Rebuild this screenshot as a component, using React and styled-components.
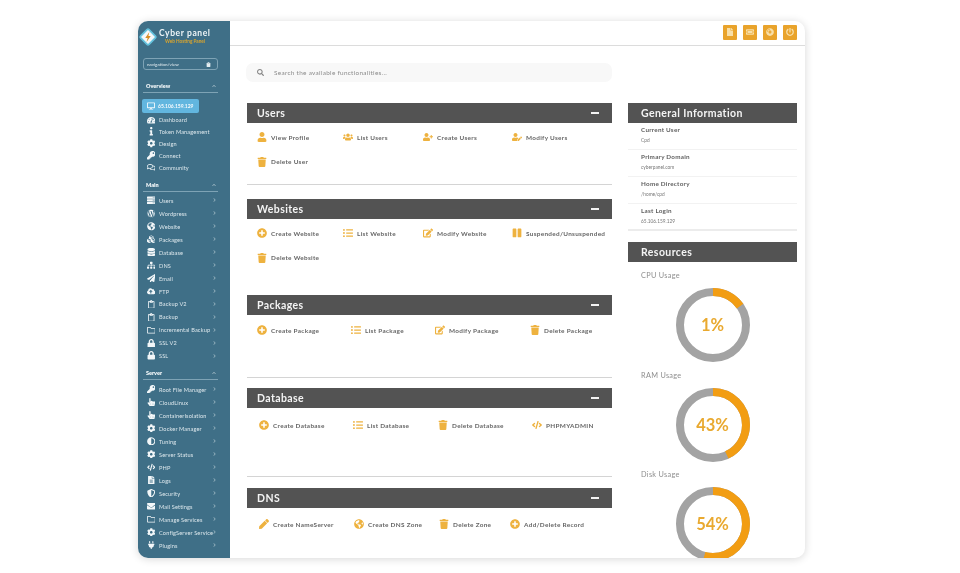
import React from "react";
import styled, { createGlobalStyle } from "styled-components";
import {
  FaAdjust, FaChevronRight, FaChevronUp, FaClipboard, FaCloudUploadAlt, FaCode, FaCog, FaCubes,
  FaDatabase, FaEdit, FaEnvelope, FaFileAlt, FaGlobeAmericas, FaHandPointer, FaInfo, FaKey,
  FaListUl, FaLock, FaPaperPlane, FaPause, FaPen, FaPlug, FaPlusCircle, FaPowerOff, FaRegComments,
  FaRegFolder, FaSearch, FaServer, FaShieldAlt, FaSitemap, FaTachometerAlt, FaTicketAlt, FaTrash,
  FaUser, FaUserEdit, FaUserPlus, FaUsers, FaWordpress, FaCompactDisc, FaFile, FaDesktop, FaRegClipboard,
} from "react-icons/fa";

const overview = [
  [FaTachometerAlt, "Dashboard"],
  [FaInfo, "Token Management"],
  [FaCog, "Design"],
  [FaKey, "Connect"],
  [FaRegComments, "Community"],
];

const mainNav = [
  [FaServer, "Users"],
  [FaWordpress, "Wordpress"],
  [FaGlobeAmericas, "Website"],
  [FaCubes, "Packages"],
  [FaDatabase, "Database"],
  [FaSitemap, "DNS"],
  [FaPaperPlane, "Email"],
  [FaCloudUploadAlt, "FTP"],
  [FaRegClipboard, "Backup V2"],
  [FaRegClipboard, "Backup"],
  [FaRegFolder, "Incremental Backup"],
  [FaLock, "SSL V2"],
  [FaLock, "SSL"],
];

const serverNav = [
  [FaKey, "Root File Manager"],
  [FaHandPointer, "CloudLinux"],
  [FaHandPointer, "ContainerIsolation"],
  [FaCog, "Docker Manager"],
  [FaAdjust, "Tuning"],
  [FaCog, "Server Status"],
  [FaCode, "PHP"],
  [FaFileAlt, "Logs"],
  [FaShieldAlt, "Security"],
  [FaEnvelope, "Mail Settings"],
  [FaRegFolder, "Manage Services"],
  [FaCog, "ConfigServer Service"],
  [FaPlug, "Plugins"],
];

const sections = [
  {
    title: "Users",
    height: 96,
    rule: 14,
    pad: 9,
    top: 7,
    columns: "86px 80px 89px 1fr",
    items: [
      [FaUser, "View Profile"],
      [FaUsers, "List Users"],
      [FaUserPlus, "Create Users"],
      [FaUserEdit, "Modify Users"],
      [FaTrash, "Delete User"],
    ],
  },
  {
    title: "Websites",
    height: 96,
    pad: 9,
    top: 7,
    columns: "86px 80px 89px 1fr",
    items: [
      [FaPlusCircle, "Create Website"],
      [FaListUl, "List Website"],
      [FaEdit, "Modify Website"],
      [FaPause, "Suspended/Unsuspended"],
      [FaTrash, "Delete Website"],
    ],
  },
  {
    title: "Packages",
    height: 93,
    rule: 10,
    pad: 9,
    top: 8,
    columns: "94px 84px 95px 1fr",
    items: [
      [FaPlusCircle, "Create Package"],
      [FaListUl, "List Package"],
      [FaEdit, "Modify Package"],
      [FaTrash, "Delete Package"],
    ],
  },
  {
    title: "Database",
    height: 100,
    rule: 11,
    pad: 11,
    top: 10,
    columns: "94px 85px 94px 1fr",
    items: [
      [FaPlusCircle, "Create Database"],
      [FaListUl, "List Database"],
      [FaTrash, "Delete Database"],
      [FaCode, "PHPMYADMIN"],
    ],
  },
  {
    title: "DNS",
    height: 70,
    pad: 11,
    top: 9,
    columns: "95px 85px 71px 1fr",
    items: [
      [FaPen, "Create NameServer"],
      [FaGlobeAmericas, "Create DNS Zone"],
      [FaTrash, "Delete Zone"],
      [FaPlusCircle, "Add/Delete Record"],
    ],
  },
];

const info = [
  ["Current User", "Cpd"],
  ["Primary Domain", "cyberpanel.com"],
  ["Home Directory", "/home/cpd"],
  ["Last Login", "65.106.159.129"],
];

const usage = [
  { label: "CPU Usage", text: "1%", sweep: 55 },
  { label: "RAM Usage", text: "43%", sweep: 155 },
  { label: "Disk Usage", text: "54%", sweep: 195 },
];

const GlobalStyle = createGlobalStyle`
  html, body {
    margin: 0;
    background: #fff;
    overflow: hidden;
  }
  * {
    box-sizing: border-box;
  }
`;

const Page = styled.div`
  width: 960px;
  height: 573px;
  padding: 21px 155px 15px 138px;
  font-family: "Lato", "Liberation Sans", sans-serif;
  filter: blur(0.3px);
`;

const Card = styled.div`
  display: flex;
  height: 537px;
  border-radius: 10px;
  overflow: hidden;
  background: #fff;
  box-shadow: 0 1px 8px rgba(0, 0, 0, 0.16);
`;

const Sidebar = styled.aside`
  flex: 0 0 92px;
  padding: 0 12px 0 5px;
  background: #3f6f87;
  color: #e4edf1;
`;

const Brand = styled.div`
  display: flex;
  align-items: center;
  gap: 1px;
  height: 31px;
`;

const BrandName = styled.div`
  font-size: 8.5px;
  font-weight: 700;
  letter-spacing: 0.6px;
  line-height: 9px;
  color: #eef5f8;
  white-space: nowrap;
`;

const BrandSub = styled.div`
  font-size: 4.7px;
  font-weight: 700;
  line-height: 7px;
  padding-left: 6px;
  color: #d9a52e;
  white-space: nowrap;
`;

const SideSearch = styled.div`
  display: flex;
  align-items: center;
  justify-content: space-between;
  height: 12px;
  margin-top: 6px;
  padding: 0 6px 0 3px;
  border: 1px solid #7ea3b5;
  border-radius: 3px;
  font-size: 4.5px;
  color: #e4edf1;
  svg {
    width: 5px;
    height: 5px;
  }
`;

const GroupLabel = styled.div`
  display: flex;
  align-items: center;
  justify-content: space-between;
  height: ${(p) => p.$height || 12.5}px;
  margin-top: ${(p) => p.$top}px;
  padding: 0 2px 0 3px;
  border-bottom: 1px solid #7ea3b5;
  font-size: 5.5px;
  font-weight: 800;
  color: #f2f7f9;
  svg {
    width: 4px;
    height: 4px;
    opacity: 0.6;
  }
`;

const IpButton = styled.div`
  display: flex;
  align-items: center;
  gap: 3px;
  width: 57px;
  height: 14px;
  margin: 6.5px 0 1px -1px;
  padding-left: 5px;
  border-radius: 2px;
  background: #62b6df;
  font-size: 5px;
  font-weight: 700;
  color: #f3fafd;
  svg {
    width: 8px;
    height: 8px;
  }
`;

const NavList = styled.nav`
  display: flex;
  flex-direction: column;
  margin-top: ${(p) => p.$top || 0}px;
`;

const NavRow = styled.div`
  display: flex;
  align-items: center;
  height: ${(p) => p.$row}px;
  font-size: 5.6px;
  letter-spacing: 0.15px;
  white-space: nowrap;
  color: #dde8ed;
`;

const NavIcon = styled.span`
  display: flex;
  align-items: center;
  justify-content: center;
  flex: 0 0 16px;
  svg {
    width: 8.5px;
    height: 8.5px;
    color: #f3f7f9;
  }
`;

const NavChevron = styled.span`
  display: flex;
  margin-left: auto;
  padding-right: 2px;
  svg {
    width: 3px;
    height: 4px;
    opacity: 0.6;
  }
`;

const Main = styled.main`
  flex: 1;
  min-width: 0;
  display: flex;
  flex-direction: column;
`;

const TopBar = styled.header`
  display: flex;
  justify-content: flex-end;
  gap: 5.5px;
  flex: 0 0 25px;
  padding: 4px 8px 0 0;
  border-bottom: 1px solid #dcdcdc;
`;

const TopButton = styled.div`
  display: flex;
  align-items: center;
  justify-content: center;
  width: 14.5px;
  height: 14.5px;
  border-radius: 1px;
  background: #e9a32b;
  svg {
    width: 8px;
    height: 8px;
    color: #f8dfa8;
  }
`;

const Content = styled.div`
  display: grid;
  grid-template-columns: 365px 169px;
  column-gap: 16px;
  padding-left: 17px;
`;

const LeftColumn = styled.div`
  display: flex;
  flex-direction: column;
`;

const SearchBox = styled.div`
  display: flex;
  align-items: center;
  gap: 10px;
  height: 19px;
  margin: 17px 0 21px -1px;
  padding-left: 11px;
  border-radius: 7px;
  background: #f8f8f8;
  font-size: 6.4px;
  letter-spacing: 0.3px;
  color: #8b8b8b;
  svg {
    width: 7px;
    height: 7px;
    color: #858585;
  }
`;

const Section = styled.section`
  display: flex;
  flex-direction: column;
  flex: 0 0 ${(p) => p.$height}px;
`;

const SectionBar = styled.div`
  display: flex;
  align-items: center;
  justify-content: space-between;
  height: 20px;
  flex: none;
  padding: 0 13px 0 10px;
  background: #535353;
  font-size: 10.5px;
  font-weight: 700;
  letter-spacing: 0.4px;
  color: #f4f4f4;
`;

const Minus = styled.span`
  width: 8px;
  height: 1.5px;
  background: #f4f4f4;
`;

const ActionGrid = styled.div`
  display: grid;
  grid-template-columns: ${(p) => p.$columns};
  grid-auto-rows: 14px;
  row-gap: 10.5px;
  padding: ${(p) => p.$top}px 0 0 ${(p) => p.$pad}px;
`;

const Action = styled.div`
  display: flex;
  align-items: center;
  font-size: 6.4px;
  font-weight: 700;
  letter-spacing: 0.3px;
  white-space: nowrap;
  color: #666;
`;

const ActionIcon = styled.span`
  display: flex;
  justify-content: center;
  flex: 0 0 15px;
  padding-right: 4px;
  svg {
    width: 10px;
    height: 10px;
    color: #eeb23f;
  }
`;

const Rule = styled.hr`
  width: 100%;
  height: 1px;
  margin: auto 0 ${(p) => p.$gap}px;
  border: 0;
  background: #d4d4d4;
`;

const RightColumn = styled.div`
  padding-top: 57px;
`;

const InfoItem = styled.div`
  height: 27px;
  padding: 1px 0 0 13px;
  border-bottom: ${(p) => (p.$last ? "2px solid #ececec" : "1px solid #f2f2f2")};
`;

const InfoLabel = styled.div`
  font-size: 6.3px;
  font-weight: 700;
  line-height: 11px;
  letter-spacing: 0.25px;
  color: #5e5e5e;
`;

const InfoValue = styled.div`
  font-size: 4.8px;
  line-height: 11px;
  color: #777;
`;

const InfoBar = styled(SectionBar)`
  padding-left: 13px;
`;

const ResourcesBar = styled(InfoBar)`
  margin-top: 11px;
`;

const Usage = styled.div`
  display: flex;
  flex-direction: column;
  height: 99.5px;
  padding-top: 9px;
`;

const UsageLabel = styled.div`
  padding-left: 13px;
  font-size: 7.3px;
  line-height: 10px;
  letter-spacing: 0.3px;
  color: #8e8e8e;
`;

const DonutBox = styled.div`
  position: relative;
  align-self: center;
  width: 74px;
  height: 74px;
  margin-top: 7px;
`;

const DonutText = styled.div`
  position: absolute;
  inset: 0;
  display: flex;
  align-items: center;
  justify-content: center;
  font-size: 16.5px;
  font-weight: 700;
  color: #e9a92f;
`;

function Logo() {
  return (
    <svg width="20" height="20" viewBox="0 0 22 22" style={{ flex: "0 0 20px", marginLeft: -5 }}>
      <rect x="4.5" y="4.5" width="13" height="13" rx="1.5" transform="rotate(45 11 11)" fill="#f4f8fa" stroke="#63c1dc" strokeWidth="2" />
      <path d="M12.5 5.5 8 12h2.6l-1.2 4.6L14 9.8h-2.6z" fill="#d98d22" />
    </svg>
  );
}

function Donut({ sweep, text }) {
  const r = 33;
  const length = 2 * Math.PI * r;
  return (
    <DonutBox>
      <svg width="74" height="74" viewBox="0 0 74 74">
        <circle cx="37" cy="37" r={r} fill="none" stroke="#a3a3a3" strokeWidth="8" />
        <circle
          cx="37"
          cy="37"
          r={r}
          fill="none"
          stroke="#f29d13"
          strokeWidth="8"
          strokeDasharray={`${(length * sweep) / 360} ${length}`}
          transform="rotate(-90 37 37)"
        />
      </svg>
      <DonutText>{text}</DonutText>
    </DonutBox>
  );
}

function NavItems({ items, row, chevron }) {
  return items.map(([Icon, label]) => (
    <NavRow key={label} $row={row}>
      <NavIcon>
        <Icon />
      </NavIcon>
      {label}
      {chevron && (
        <NavChevron>
          <FaChevronRight />
        </NavChevron>
      )}
    </NavRow>
  ));
}

export default function App() {
  return (
    <Page>
      <GlobalStyle />
      <Card>
        <Sidebar>
          <Brand>
            <Logo />
            <div>
              <BrandName>Cyber panel</BrandName>
              <BrandSub>Web Hosting Panel</BrandSub>
            </div>
          </Brand>
          <SideSearch>
            navigation/view
            <FaClipboard />
          </SideSearch>
          <GroupLabel $top={10}>
            Overview
            <FaChevronUp />
          </GroupLabel>
          <IpButton>
            <FaDesktop />
            65.106.159.129
          </IpButton>
          <NavList>
            <NavItems items={overview} row={11.8} />
          </NavList>
          <GroupLabel $top={6} $height={13}>
            Main
            <FaChevronUp />
          </GroupLabel>
          <NavList $top={2}>
            <NavItems items={mainNav} row={12.95} chevron />
          </NavList>
          <GroupLabel $top={5} $height={13}>
            Server
            <FaChevronUp />
          </GroupLabel>
          <NavList $top={2.5}>
            <NavItems items={serverNav} row={13} chevron />
          </NavList>
        </Sidebar>
        <Main>
          <TopBar>
            <TopButton><FaFile /></TopButton>
            <TopButton><FaTicketAlt /></TopButton>
            <TopButton><FaCompactDisc /></TopButton>
            <TopButton><FaPowerOff /></TopButton>
          </TopBar>
          <Content>
            <LeftColumn>
              <SearchBox>
                <FaSearch />
                Search the available functionalities...
              </SearchBox>
              {sections.map((s) => (
                <Section key={s.title} $height={s.height}>
                  <SectionBar>
                    {s.title}
                    <Minus />
                  </SectionBar>
                  <ActionGrid $columns={s.columns} $pad={s.pad} $top={s.top}>
                    {s.items.map(([Icon, label]) => (
                      <Action key={label}>
                        <ActionIcon>
                          <Icon />
                        </ActionIcon>
                        {label}
                      </Action>
                    ))}
                  </ActionGrid>
                  {s.rule && <Rule $gap={s.rule} />}
                </Section>
              ))}
            </LeftColumn>
            <RightColumn>
              <InfoBar>General Information</InfoBar>
              {info.map(([label, value], i) => (
                <InfoItem key={label} $last={i === info.length - 1}>
                  <InfoLabel>{label}</InfoLabel>
                  <InfoValue>{value}</InfoValue>
                </InfoItem>
              ))}
              <ResourcesBar>Resources</ResourcesBar>
              {usage.map((u) => (
                <Usage key={u.label}>
                  <UsageLabel>{u.label}</UsageLabel>
                  <Donut sweep={u.sweep} text={u.text} />
                </Usage>
              ))}
            </RightColumn>
          </Content>
        </Main>
      </Card>
    </Page>
  );
}
